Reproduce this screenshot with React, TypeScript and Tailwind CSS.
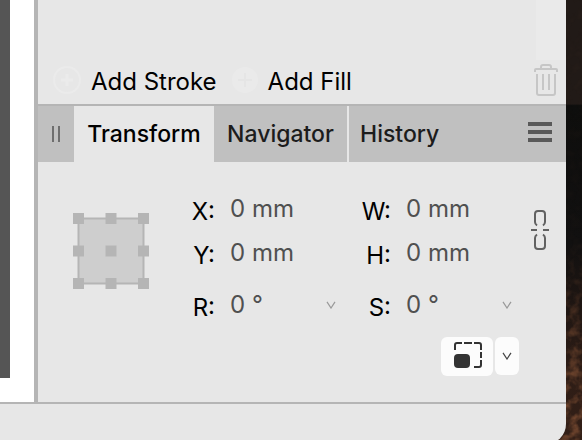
import React from 'react';

interface FieldProps {
  id: string;
  label: string;
  value: string;
  menu?: boolean;
}

const Chevron: React.FC<{ className: string }> = ({ className }) => (
  <svg viewBox="0 0 10 8" className={`w-[10px] h-2 ${className}`} fill="none" stroke="currentColor" strokeWidth="1.2">
    <path d="M1 0.8 L5 7 L9 0.8" />
  </svg>
);

const Field: React.FC<FieldProps> = ({ id, label, value, menu }) => (
  <div className="flex flex-1 min-w-0 h-8 items-center">
    <label htmlFor={id} className="w-[55px] pt-[6px] text-right text-black">{label}</label>
    <input
      id={id}
      defaultValue={value}
      className="flex-1 min-w-0 ml-[15px] bg-transparent text-[#505050] outline-none"
    />
    {menu ? (
      <button type="button" aria-label={`${label} presets`} className="w-[10px]">
        <Chevron className="text-[#999]" />
      </button>
    ) : (
      <span className="w-[10px]" />
    )}
  </div>
);

const AnchorPicker = () => {
  const stops = [0, 32.5, 65];
  return (
    <svg viewBox="0 0 76 76" className="w-[76px] h-[76px] shrink-0" role="img" aria-label="Anchor point">
      <rect x="5.5" y="5.5" width="65" height="65" fill="#cecece" stroke="#b5b5b5" strokeWidth="2" />
      {stops.map((y) =>
        stops.map((x) => <rect key={`${x}-${y}`} x={x} y={y} width="11" height="11" fill="#b5b5b5" />)
      )}
    </svg>
  );
};

const AppearancePanel = () => (
  <section className="flex h-[104px]">
    <div className="flex flex-1 items-end pl-[15px] pb-[6px]">
      <button type="button" className="flex items-center gap-[10px] text-black">
        <svg viewBox="0 0 28 28" className="w-7 h-7" fill="none" stroke="#ebebeb" strokeWidth="2">
          <circle cx="14" cy="14" r="13" />
          <path d="M14 8v12M8 14h12" strokeWidth="3" />
        </svg>
        <span className="pt-1">Add Stroke</span>
      </button>
      <button type="button" className="flex items-center gap-[9px] ml-[14px] text-black">
        <svg viewBox="0 0 28 28" className="w-7 h-7">
          <circle cx="14" cy="14" r="13" fill="#eaeaea" />
          <path d="M14 7v14M7 14h14" stroke="#e5e5e5" strokeWidth="2" />
        </svg>
        <span className="pt-1">Add Fill</span>
      </button>
    </div>
    <div className="flex flex-col w-[30px]">
      <div className="h-[60px] bg-[#eaeaea]" />
      <button type="button" aria-label="Delete" className="pt-1 -ml-[2px]">
        <svg viewBox="0 0 24 32" className="w-6 h-8" fill="none" stroke="#c6c6c6" strokeWidth="2">
          <path d="M1 8V6Q1 5 2 5H22Q23 5 23 6V8" />
          <path d="M7 5V3Q7 1 9 1H15Q17 1 17 3V5" />
          <path d="M3 10V29Q3 31 5 31H19Q21 31 21 29V10" />
          <path d="M9 10V26M15 10V26" />
        </svg>
      </button>
    </div>
  </section>
);

const TabBar = () => (
  <div role="tablist" className="flex h-14 bg-[#c0c0c0] text-[23px] font-medium text-[#1c1c1c]">
    <div className="flex w-9 items-center justify-center gap-1">
      <span className="w-[2px] h-4 bg-[#6e6e6e]" />
      <span className="w-[2px] h-4 bg-[#6e6e6e]" />
    </div>
    <button type="button" role="tab" aria-selected="true" className="w-[140px] bg-[#e7e7e7] text-black">
      Transform
    </button>
    <button type="button" role="tab" aria-selected="false" className="w-[133px]">
      Navigator
    </button>
    <button type="button" role="tab" aria-selected="false" className="pl-[11px] border-l-2 border-[#e7e7e7]">
      History
    </button>
    <button type="button" aria-label="Panel menu" className="flex flex-col gap-1 ml-auto mr-[14px] pt-4">
      <span className="w-6 h-1 bg-[#595959]" />
      <span className="w-6 h-1 bg-[#595959]" />
      <span className="w-6 h-1 bg-[#595959]" />
    </button>
  </div>
);

const TransformPanel = () => (
  <section className="h-60 pt-[31px]">
    <div className="flex items-start pl-[35px] pr-[17px]">
      <div className="pt-5">
        <AnchorPicker />
      </div>
      <div className="flex flex-1 flex-col min-w-0 gap-3 ml-[11px]">
        <div className="flex">
          <Field id="x" label="X:" value="0 mm" />
          <Field id="w" label="W:" value="0 mm" />
        </div>
        <div className="flex">
          <Field id="y" label="Y:" value="0 mm" />
          <Field id="h" label="H:" value="0 mm" />
        </div>
        <div className="flex pt-2">
          <Field id="r" label="R:" value="0 °" menu />
          <Field id="s" label="S:" value="0 °" menu />
        </div>
      </div>
      <button type="button" aria-label="Lock aspect ratio" className="ml-[19px] pt-[17px]">
        <svg viewBox="0 0 18 40" className="w-[18px] h-10" fill="none" stroke="#616161" strokeWidth="2">
          <path d="M6 15.5Q4 14 4 12V4Q4 1 7 1H11Q14 1 14 4V12Q14 14 12 15.5" />
          <path d="M6 24.5Q4 26 4 28V36Q4 39 7 39H11Q14 39 14 36V28Q14 26 12 24.5" />
          <path d="M0 20H6M12 20H18" />
        </svg>
      </button>
    </div>
    <div className="flex justify-end gap-[2px] mt-4 pr-[47px]">
      <button
        type="button"
        aria-label="Scale with object"
        className="flex w-[52px] h-[39px] pl-[13px] pt-[5px] rounded-md bg-[#fcfcfc]"
      >
        <svg viewBox="0 0 28 26" className="w-7 h-[26px]" fill="none" stroke="#333" strokeWidth="2">
          <path d="M1 8V3Q1 1 3 1H8M10 1H18M20 1H25Q27 1 27 3V8M27 10V16M27 18V23Q27 25 25 25H20" />
          <rect x="0" y="12" width="16" height="14" rx="4" fill="#333" stroke="none" />
        </svg>
      </button>
      <button
        type="button"
        aria-label="Scale options"
        className="flex w-6 h-[38px] items-center justify-center rounded-md bg-[#fcfcfc]"
      >
        <Chevron className="text-[#444]" />
      </button>
    </div>
  </section>
);

const Wallpaper = () => (
  <svg className="absolute inset-0 w-full h-full" aria-hidden="true">
    <defs>
      <linearGradient id="rock" x1="0" y1="0" x2="0" y2="1">
        <stop offset="0" stopColor="#211a17" />
        <stop offset="0.236" stopColor="#211a17" />
        <stop offset="0.24" stopColor="#0e0e0d" />
        <stop offset="0.55" stopColor="#111010" />
        <stop offset="0.68" stopColor="#1d1512" />
        <stop offset="0.85" stopColor="#2e1d16" />
        <stop offset="1" stopColor="#321f17" />
      </linearGradient>
      <linearGradient id="fade" x1="0" y1="0" x2="0" y2="1">
        <stop offset="0.55" stopColor="#fff" stopOpacity="0.04" />
        <stop offset="0.9" stopColor="#fff" stopOpacity="0.7" />
      </linearGradient>
      <mask id="lower">
        <rect width="100%" height="100%" fill="url(#fade)" />
      </mask>
      <filter id="grain" x="0" y="0" width="100%" height="100%" colorInterpolationFilters="sRGB">
        <feTurbulence type="fractalNoise" baseFrequency="0.1" numOctaves="3" seed="4" />
        <feColorMatrix values="0 0 0 0 0.55  0 0 0 0 0.34  0 0 0 0 0.22  2.6 0 0 0 -1.1" />
      </filter>
    </defs>
    <rect width="100%" height="100%" fill="url(#rock)" />
    <g mask="url(#lower)">
      <rect width="100%" height="100%" filter="url(#grain)" />
    </g>
  </svg>
);

export default function App() {
  return (
    <div className="relative h-screen overflow-hidden pr-4 font-['Inter',sans-serif] text-[24px] leading-8">
      <Wallpaper />
      <div className="relative overflow-hidden rounded-br-[20px] bg-[#e7e7e7]">
        <div className="flex">
          <div className="w-[34px] bg-white">
            <div className="w-[10px] h-[378px] bg-[#555]" />
          </div>
          <main className="flex-1 min-w-0 border-l-4 border-[#b5b5b5]">
            <AppearancePanel />
            <div className="h-[2px] bg-[#b5b5b5]" />
            <TabBar />
            <TransformPanel />
          </main>
        </div>
        <footer className="h-[42px] border-t-2 border-[#b5b5b5]" />
      </div>
    </div>
  );
}
